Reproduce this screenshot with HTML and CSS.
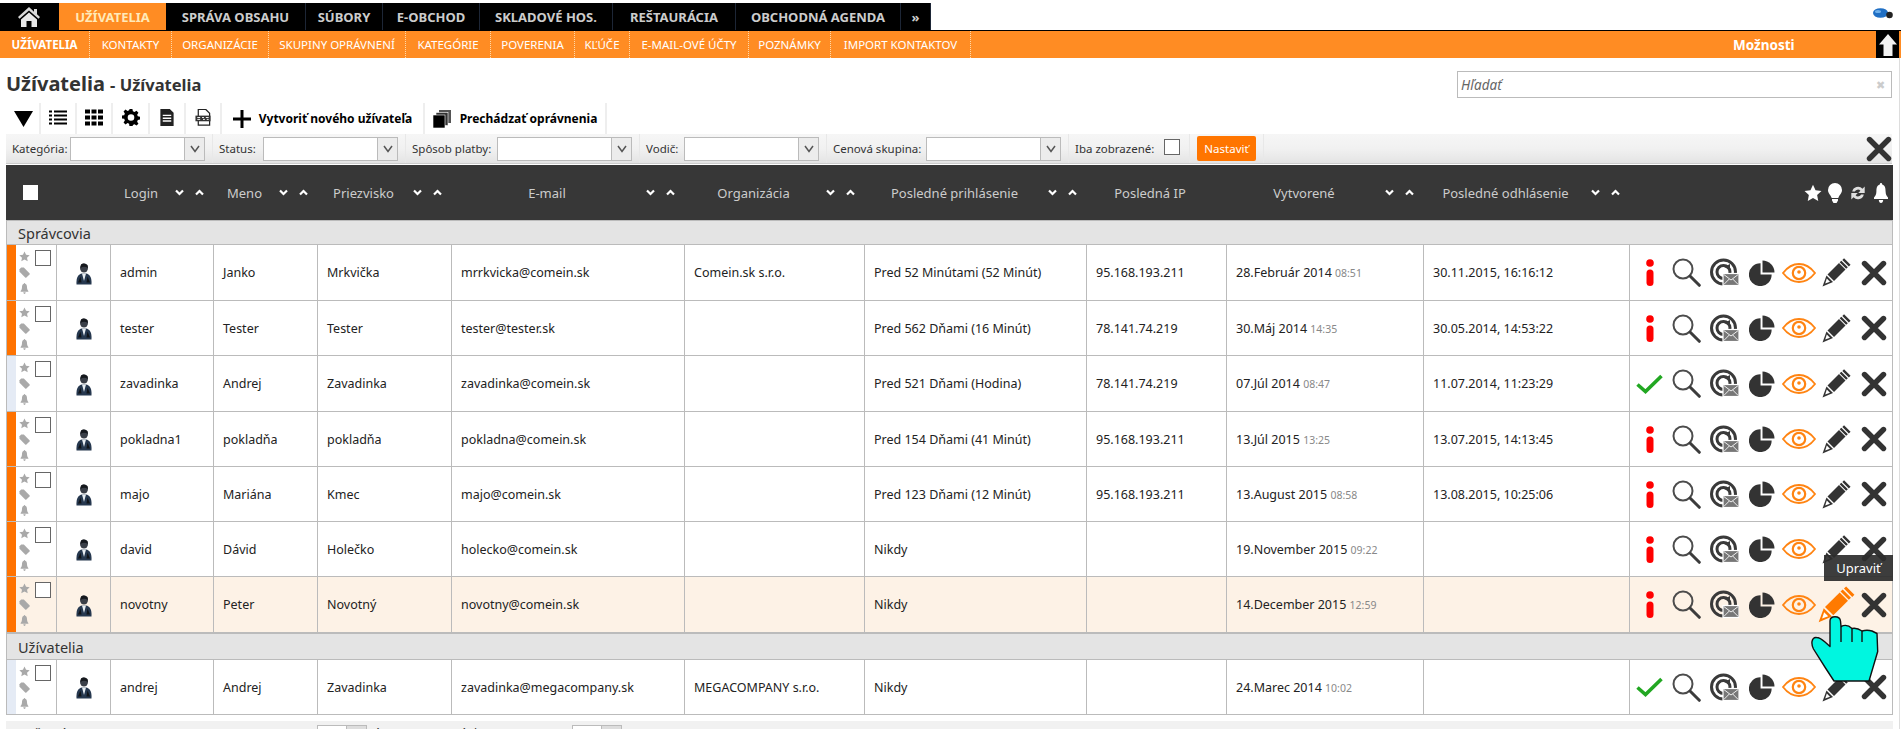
FILE: index.html
```html
<!DOCTYPE html>
<html lang="sk">
<head>
<meta charset="utf-8">
<title>Užívatelia</title>
<link rel="stylesheet" href="styles.css">
</head>
<body>
<svg class="defs" aria-hidden="true">
  <symbol id="star" viewBox="0 0 24 24"><path d="M12 1l3.4 7.3 7.9 1-5.8 5.4 1.5 7.9L12 18.7l-7 3.9 1.5-7.9L.7 9.3l7.9-1z"/></symbol>
  <symbol id="tag" viewBox="0 0 11 11"><path d="M.5 2.2L2.2.5h2.6l5.7 5.7q.5.6 0 1.2l-3.1 3.1q-.6.5-1.2 0L.5 4.8z"/></symbol>
  <symbol id="bell" viewBox="0 0 14 20"><path d="M7 0q1.2 0 1.2 1.4c3 .8 3.3 3.6 3.4 7 .1 2.800.9 4.400 2.400 6.100v1.500H0v-1.500c1.500-1.700 2.300-3.300 2.400-6.100.1-3.400.4-6.200 3.400-7Q5.800 0 7 0zM4.800 17h4.400Q8.900 20 7 20t-2.200-3z"/></symbol>
  <symbol id="bulb" viewBox="0 0 14 20"><path d="M7 0a7 7 0 0 1 7 7c0 3.500-2.800 5-3.700 8H3.700C2.800 12 0 10.500 0 7a7 7 0 0 1 7-7zM4 16h6v1.500L8.500 20h-3L4 17.500z"/></symbol>
  <symbol id="refresh" viewBox="0 0 18 18"><path d="M3.200 7.500A6 6 0 0 1 13.500 4.700L15.700 2.500V9H9.200l2.200-2.200a3.300 3.300 0 0 0-5.500.7zM14.800 10.500A6 6 0 0 1 4.500 13.300L2.300 15.500V9h6.500l-2.200 2.200a3.300 3.300 0 0 0 5.500-.7z"/></symbol>
  <symbol id="person" viewBox="0 0 16 22"><ellipse cx="8" cy="5" rx="4" ry="4.600" fill="#3a3f48"/><path d="M5 1.500Q8-.8 11.500 2L12 5Q8 2.500 4.500 5z" fill="#15181d"/><path d="M.5 21.500C0 14 2.500 11 6 10.500h4c3.500.5 6 3.500 5.500 11z" fill="#26384f"/><path d="M6 10.500h4L8 18z" fill="#e8eef3"/><path d="M2 19.500l2.500-6 1 6z" fill="#101418"/><path d="M14 19.500l-2.500-6-1 6z" fill="#101418"/></symbol>
  <symbol id="info" viewBox="0 0 10 27"><circle cx="5" cy="4" r="3.800"/><rect x="1.500" y="10.500" width="7" height="16.500" rx="3.500"/></symbol>
  <symbol id="check" viewBox="0 0 27 20"><path d="M1.500 10.500l8 7L25.500 2" fill="none" stroke="#22a722" stroke-width="3.600"/></symbol>
  <symbol id="mag" viewBox="0 0 29 29"><circle cx="11" cy="11" r="9.500" fill="none" stroke="#4c4c4c" stroke-width="2"/><path d="M18 18l9.300 9.300" stroke="#3c3c3c" stroke-width="3" stroke-linecap="round"/></symbol>
  <symbol id="at" viewBox="0 0 29 28"><circle cx="13.500" cy="13.500" r="12" fill="none" stroke="#3a3a3a" stroke-width="3"/><circle cx="13.500" cy="13.500" r="6.500" fill="none" stroke="#3a3a3a" stroke-width="3"/><path d="M14 8.500l6-3v6" fill="#3a3a3a"/><rect x="13" y="15" width="16" height="12" fill="#777" stroke="#fff" stroke-width="1.200"/><path d="M13.800 16l7.200 5.500 7.200-5.500M13.800 26l5.500-5.500M28.200 26l-5.500-5.500" fill="none" stroke="#eee"/></symbol>
  <symbol id="pie" viewBox="0 0 27 27"><path d="M12 3.500V15h11.500A11.800 11.800 0 1 1 12 3.500z" fill="#333"/><path d="M14 .500A12.800 12.800 0 0 1 26.500 13H14z" fill="#333"/></symbol>
  <symbol id="eye" viewBox="0 0 34 20"><path d="M1 10C6 3.500 11 1 17 1s11 2.500 16 9c-5 6.500-10 9-16 9S6 16.500 1 10z" fill="none" stroke="#ff8412" stroke-width="1.800"/><circle cx="17" cy="10" r="6.200" fill="none" stroke="#ff8412" stroke-width="2.200"/><circle cx="17" cy="9" r="1.800" fill="#ff8412"/></symbol>
  <symbol id="pen" viewBox="0 0 29 29"><path d="M5.500 16.500L17 5l6.500 6.500L12 23z"/><path d="M4.500 17.500l6.500 6.500L.5 28.500z"/><path d="M4.800 20.500l3.200 3.200-4.800 1.700z" fill="#fff"/><path d="M18.500 3.500l6.500 6.500M21.200 1.200l6.500 6.500" stroke-width="2.400" stroke="currentColor" fill="none"/></symbol>
  <symbol id="cross" viewBox="0 0 26 26"><path d="M3.500 3.500l19 19M22.500 3.500l-19 19" fill="none" stroke="currentColor" stroke-width="5.400" stroke-linecap="round"/></symbol>
  <symbol id="down" viewBox="0 0 9 7"><path d="M1 1.500l3.500 3.500L8 1.500" fill="none" stroke="#fff" stroke-width="2.200"/></symbol>
  <symbol id="up" viewBox="0 0 9 7"><path d="M1 5.500L4.500 2 8 5.500" fill="none" stroke="#fff" stroke-width="2.200"/></symbol>
  <symbol id="selarr" viewBox="0 0 12 10"><path d="M2 2l4 5.500L10 2" fill="none" stroke="#555" stroke-width="1.500"/></symbol>
</svg>

<nav class="topnav">
  <div class="tabs">
    <a class="tab home"><svg class="homeico" viewBox="0 0 24 21"><path d="M12 1L1 11l1.500 1.800L12 4.500l9.500 8.300L23 11l-3-2.700V3h-3v2.700z" fill="#d8d8d8"/><path d="M4 13.500L12 6.500l8 7V21h-5.500v-6h-5v6H4z" fill="#e8e8e8"/></svg></a>
    <a class="tab on">UŽÍVATELIA</a>
    <a class="tab">SPRÁVA OBSAHU</a>
    <a class="tab">SÚBORY</a>
    <a class="tab">E-OBCHOD</a>
    <a class="tab">SKLADOVÉ HOS.</a>
    <a class="tab">REŠTAURÁCIA</a>
    <a class="tab">OBCHODNÁ AGENDA</a>
    <a class="tab">»</a>
  </div>
  <svg class="mouse" viewBox="0 0 20 11"><ellipse cx="7.500" cy="5" rx="7.500" ry="4.800" fill="#1f6fc4"/><ellipse cx="5" cy="3.500" rx="3" ry="1.500" fill="#6fb0ea"/><circle cx="16.500" cy="7" r="3.300" fill="#222"/></svg>
</nav>

<div class="subnav">
  <div class="subtabs">
    <a class="sub on">UŽÍVATELIA</a>
    <a class="sub">KONTAKTY</a>
    <a class="sub">ORGANIZÁCIE</a>
    <a class="sub">SKUPINY OPRÁVNENÍ</a>
    <a class="sub">KATEGÓRIE</a>
    <a class="sub">POVERENIA</a>
    <a class="sub">KĽÚČE</a>
    <a class="sub">E-MAIL-OVÉ ÚČTY</a>
    <a class="sub">POZNÁMKY</a>
    <a class="sub">IMPORT KONTAKTOV</a>
  </div>
  <a class="options">Možnosti</a>
  <a class="upbox"><svg viewBox="0 0 20 24"><path d="M10 1l9 10.500h-4.500V23h-9V11.500H1z" fill="#f2f2f2"/></svg></a>
</div>

<main class="main">
  <div class="titlerow">
    <h1 class="title">Užívatelia <span class="title-sub">- Užívatelia</span></h1>
    <div class="search"><span class="search-ph">Hľadať</span><span class="search-x">✖</span></div>
  </div>

  <div class="toolbar">
    <a class="tbtn w35"><svg class="ico-tri" viewBox="0 0 19 16"><path d="M0 0h19L9.500 16z"/></svg></a>
    <a class="tbtn w36"><svg class="ico-16" viewBox="0 0 18 16"><path d="M0 1h3v2H0zM5 1h13v2H5zM0 5h3v2H0zM5 5h13v2H5zM0 9h3v2H0zM5 9h13v2H5zM0 13h3v2H0zM5 13h13v2H5z"/></svg></a>
    <a class="tbtn w36"><svg class="ico-16" viewBox="0 0 18 16"><path d="M0 0h5v4H0zM6.500 0h5v4h-5zM13 0h5v4h-5zM0 6h5v4H0zM6.500 6h5v4h-5zM13 6h5v4h-5zM0 12h5v4H0zM6.500 12h5v4h-5zM13 12h5v4h-5z"/></svg></a>
    <a class="tbtn w37"><svg class="ico-16" viewBox="0 0 18 18"><path d="M7.500 0h3l.5 2.500 1.700.7 2.100-1.400 2.100 2.100-1.400 2.100.7 1.700 2.500.5v3l-2.500.5-.7 1.700 1.400 2.100-2.100 2.100-2.100-1.400-1.700.7-.5 2.500h-3L7 15.600l-1.700-.7-2.100 1.400-2.100-2.100 1.400-2.100-.7-1.700L-.7 10V7l2.500-.5.7-1.700L1.100 2.700 3.200.6l2.100 1.400L7 1.300zM9 5.500a3.500 3.500 0 1 0 0 7 3.500 3.500 0 0 0 0-7z" fill-rule="evenodd"/></svg></a>
    <a class="tbtn w36"><svg class="ico-16" viewBox="0 0 16 18"><path d="M1 0h10l4 4v14H1zM3.500 6v1.500h9V6zM3.500 9v1.500h9V9zM3.500 12v1.500h9V12z" fill="#222" fill-rule="evenodd"/></svg></a>
    <a class="tbtn w36"><svg class="ico-16" viewBox="0 0 16 18"><path d="M3 .5h8l4 4V17H3z" fill="none" stroke="#222" stroke-width="1.300"/><rect x="0" y="7" width="16" height="6" fill="#333"/><path d="M2 9h3M7 9h2M11 9h3M2 11h3M8 11h2M12 11h2" stroke="#fff"/></svg></a>
    <a class="tbtn w203"><svg class="ico-plus" viewBox="0 0 18 18"><path d="M7.500 0h3v7.500H18v3h-7.500V18h-3v-7.500H0v-3h7.500z"/></svg><span class="tbtn-label">Vytvoriť nového užívateľa</span></a>
    <a class="tbtn w182"><svg class="ico-docs" viewBox="0 0 18 18"><rect x="6" y="0" width="12" height="13" fill="#555"/><rect x="3" y="2.500" width="12" height="13" fill="#333" stroke="#fff" stroke-width=".6"/><rect x="0" y="5" width="12" height="13" fill="#000" stroke="#fff" stroke-width=".6"/></svg><span class="tbtn-label">Prechádzať oprávnenia</span></a>
  </div>

  <form class="filters">
    <div class="filter"><label class="flabel">Kategória:</label><span class="fselect"><i class="farrow"><svg><use href="#selarr"/></svg></i></span></div>
    <div class="filter"><label class="flabel">Status:</label><span class="fselect"><i class="farrow"><svg><use href="#selarr"/></svg></i></span></div>
    <div class="filter"><label class="flabel">Spôsob platby:</label><span class="fselect"><i class="farrow"><svg><use href="#selarr"/></svg></i></span></div>
    <div class="filter"><label class="flabel">Vodič:</label><span class="fselect"><i class="farrow"><svg><use href="#selarr"/></svg></i></span></div>
    <div class="filter"><label class="flabel">Cenová skupina:</label><span class="fselect"><i class="farrow"><svg><use href="#selarr"/></svg></i></span></div>
    <div class="filter"><label class="flabel">Iba zobrazené:</label><span class="box fcheck"></span></div>
    <div class="filter"><span class="setbtn">Nastaviť</span></div>
    <div class="filter fclose"><svg class="bigx"><use href="#cross"/></svg></div>
  </form>

  <table class="grid">
    <colgroup>
      <col class="c-a"><col class="c-b"><col class="c-c"><col class="c-d"><col class="c-e"><col class="c-f"><col class="c-g"><col class="c-h"><col class="c-i"><col class="c-j"><col class="c-k"><col class="c-l">
    </colgroup>
    <thead>
      <tr>
        <th class="th-check"><span class="box head-box"></span></th>
        <th></th>
        <th><div class="hc"><span class="ht">Login</span><span class="sort"><svg><use href="#down"/></svg><svg><use href="#up"/></svg></span></div></th>
        <th><div class="hc"><span class="ht">Meno</span><span class="sort"><svg><use href="#down"/></svg><svg><use href="#up"/></svg></span></div></th>
        <th><div class="hc"><span class="ht">Priezvisko</span><span class="sort"><svg><use href="#down"/></svg><svg><use href="#up"/></svg></span></div></th>
        <th><div class="hc"><span class="ht">E-mail</span><span class="sort"><svg><use href="#down"/></svg><svg><use href="#up"/></svg></span></div></th>
        <th><div class="hc"><span class="ht">Organizácia</span><span class="sort"><svg><use href="#down"/></svg><svg><use href="#up"/></svg></span></div></th>
        <th><div class="hc"><span class="ht">Posledné prihlásenie</span><span class="sort"><svg><use href="#down"/></svg><svg><use href="#up"/></svg></span></div></th>
        <th><div class="hc"><span class="ht">Posledná IP</span></div></th>
        <th><div class="hc"><span class="ht">Vytvorené</span><span class="sort"><svg><use href="#down"/></svg><svg><use href="#up"/></svg></span></div></th>
        <th><div class="hc"><span class="ht">Posledné odhlásenie</span><span class="sort"><svg><use href="#down"/></svg><svg><use href="#up"/></svg></span></div></th>
        <th><div class="head-icons"><svg class="hi-star"><use href="#star"/></svg><svg class="hi-bulb"><use href="#bulb"/></svg><svg class="hi-ref"><use href="#refresh"/></svg><svg class="hi-bell"><use href="#bell"/></svg></div></th>
      </tr>
    </thead>
    <tbody>
      <tr class="group g1"><td colspan="12">Správcovia</td></tr>

      <tr class="h56">
        <td class="c0 st-on"><div class="marks"><div class="mk"><svg><use href="#star"/></svg><svg><use href="#tag"/></svg><svg><use href="#bell"/></svg></div><span class="box"></span></div></td>
        <td class="cp"><svg class="person"><use href="#person"/></svg></td>
        <td>admin</td><td>Janko</td><td>Mrkvička</td><td>mrrkvicka@comein.sk</td><td>Comein.sk s.r.o.</td><td>Pred 52 Minútami (52 Minút)</td><td>95.168.193.211</td><td>28.Február 2014 <small>08:51</small></td><td>30.11.2015, 16:16:12</td>
        <td class="ca"><div class="acts"><svg class="a-i"><use href="#info"/></svg><svg class="a-m"><use href="#mag"/></svg><svg class="a-m"><use href="#at"/></svg><svg class="a-p"><use href="#pie"/></svg><svg class="a-e"><use href="#eye"/></svg><svg class="a-m a-pen"><use href="#pen"/></svg><svg class="a-p a-x"><use href="#cross"/></svg></div></td>
      </tr>
      <tr class="h55">
        <td class="c0 st-on"><div class="marks"><div class="mk"><svg><use href="#star"/></svg><svg><use href="#tag"/></svg><svg><use href="#bell"/></svg></div><span class="box"></span></div></td>
        <td class="cp"><svg class="person"><use href="#person"/></svg></td>
        <td>tester</td><td>Tester</td><td>Tester</td><td>tester@tester.sk</td><td></td><td>Pred 562 Dňami (16 Minút)</td><td>78.141.74.219</td><td>30.Máj 2014 <small>14:35</small></td><td>30.05.2014, 14:53:22</td>
        <td class="ca"><div class="acts"><svg class="a-i"><use href="#info"/></svg><svg class="a-m"><use href="#mag"/></svg><svg class="a-m"><use href="#at"/></svg><svg class="a-p"><use href="#pie"/></svg><svg class="a-e"><use href="#eye"/></svg><svg class="a-m a-pen"><use href="#pen"/></svg><svg class="a-p a-x"><use href="#cross"/></svg></div></td>
      </tr>
      <tr class="h56">
        <td class="c0 st-off"><div class="marks"><div class="mk"><svg><use href="#star"/></svg><svg><use href="#tag"/></svg><svg><use href="#bell"/></svg></div><span class="box"></span></div></td>
        <td class="cp"><svg class="person"><use href="#person"/></svg></td>
        <td>zavadinka</td><td>Andrej</td><td>Zavadinka</td><td>zavadinka@comein.sk</td><td></td><td>Pred 521 Dňami (Hodina)</td><td>78.141.74.219</td><td>07.Júl 2014 <small>08:47</small></td><td>11.07.2014, 11:23:29</td>
        <td class="ca"><div class="acts"><svg class="a-c"><use href="#check"/></svg><svg class="a-m"><use href="#mag"/></svg><svg class="a-m"><use href="#at"/></svg><svg class="a-p"><use href="#pie"/></svg><svg class="a-e"><use href="#eye"/></svg><svg class="a-m a-pen"><use href="#pen"/></svg><svg class="a-p a-x"><use href="#cross"/></svg></div></td>
      </tr>
      <tr class="h55">
        <td class="c0 st-on"><div class="marks"><div class="mk"><svg><use href="#star"/></svg><svg><use href="#tag"/></svg><svg><use href="#bell"/></svg></div><span class="box"></span></div></td>
        <td class="cp"><svg class="person"><use href="#person"/></svg></td>
        <td>pokladna1</td><td>pokladňa</td><td>pokladňa</td><td>pokladna@comein.sk</td><td></td><td>Pred 154 Dňami (41 Minút)</td><td>95.168.193.211</td><td>13.Júl 2015 <small>13:25</small></td><td>13.07.2015, 14:13:45</td>
        <td class="ca"><div class="acts"><svg class="a-i"><use href="#info"/></svg><svg class="a-m"><use href="#mag"/></svg><svg class="a-m"><use href="#at"/></svg><svg class="a-p"><use href="#pie"/></svg><svg class="a-e"><use href="#eye"/></svg><svg class="a-m a-pen"><use href="#pen"/></svg><svg class="a-p a-x"><use href="#cross"/></svg></div></td>
      </tr>
      <tr class="h55">
        <td class="c0 st-on"><div class="marks"><div class="mk"><svg><use href="#star"/></svg><svg><use href="#tag"/></svg><svg><use href="#bell"/></svg></div><span class="box"></span></div></td>
        <td class="cp"><svg class="person"><use href="#person"/></svg></td>
        <td>majo</td><td>Mariána</td><td>Kmec</td><td>majo@comein.sk</td><td></td><td>Pred 123 Dňami (12 Minút)</td><td>95.168.193.211</td><td>13.August 2015 <small>08:58</small></td><td>13.08.2015, 10:25:06</td>
        <td class="ca"><div class="acts"><svg class="a-i"><use href="#info"/></svg><svg class="a-m"><use href="#mag"/></svg><svg class="a-m"><use href="#at"/></svg><svg class="a-p"><use href="#pie"/></svg><svg class="a-e"><use href="#eye"/></svg><svg class="a-m a-pen"><use href="#pen"/></svg><svg class="a-p a-x"><use href="#cross"/></svg></div></td>
      </tr>
      <tr class="h55">
        <td class="c0 st-on"><div class="marks"><div class="mk"><svg><use href="#star"/></svg><svg><use href="#tag"/></svg><svg><use href="#bell"/></svg></div><span class="box"></span></div></td>
        <td class="cp"><svg class="person"><use href="#person"/></svg></td>
        <td>david</td><td>Dávid</td><td>Holečko</td><td>holecko@comein.sk</td><td></td><td>Nikdy</td><td></td><td>19.November 2015 <small>09:22</small></td><td></td>
        <td class="ca"><div class="acts"><svg class="a-i"><use href="#info"/></svg><svg class="a-m"><use href="#mag"/></svg><svg class="a-m"><use href="#at"/></svg><svg class="a-p"><use href="#pie"/></svg><svg class="a-e"><use href="#eye"/></svg><svg class="a-m a-pen"><use href="#pen"/></svg><svg class="a-p a-x"><use href="#cross"/></svg></div></td>
      </tr>
      <tr class="h56 hover">
        <td class="c0 st-on"><div class="marks"><div class="mk"><svg><use href="#star"/></svg><svg><use href="#tag"/></svg><svg><use href="#bell"/></svg></div><span class="box"></span></div></td>
        <td class="cp"><svg class="person"><use href="#person"/></svg></td>
        <td>novotny</td><td>Peter</td><td>Novotný</td><td>novotny@comein.sk</td><td></td><td>Nikdy</td><td></td><td>14.December 2015 <small>12:59</small></td><td></td>
        <td class="ca"><div class="acts"><svg class="a-i"><use href="#info"/></svg><svg class="a-m"><use href="#mag"/></svg><svg class="a-m"><use href="#at"/></svg><svg class="a-p"><use href="#pie"/></svg><svg class="a-e"><use href="#eye"/></svg><svg class="a-pen-on"><use href="#pen"/></svg><svg class="a-p a-x"><use href="#cross"/></svg>
          <span class="tooltip">Upraviť</span>
          <svg class="hand" viewBox="0 0 68 66"><path d="M1 25.500Q2 21 5.500 21.500 9 21.500 14 26l5 4.500V5Q19 .700 24 .700T29.500 5l.5 5.500Q36 7.500 41 12.500q5-1 10 2.500 5-1.500 10 0l5 2.500.7 18L58 65H23L14.500 52 2.500 33Q.500 29 1 25.500z" fill="#00f6e0" stroke="#111" stroke-width="1.400" stroke-linejoin="round"/><path d="M30 10.500V26M41 12.500V26M51 15v11" fill="none" stroke="#111" stroke-width="1.400"/></svg>
        </div></td>
      </tr>

      <tr class="group g2"><td colspan="12">Užívatelia</td></tr>

      <tr class="h55">
        <td class="c0 st-off"><div class="marks"><div class="mk"><svg><use href="#star"/></svg><svg><use href="#tag"/></svg><svg><use href="#bell"/></svg></div><span class="box"></span></div></td>
        <td class="cp"><svg class="person"><use href="#person"/></svg></td>
        <td>andrej</td><td>Andrej</td><td>Zavadinka</td><td>zavadinka@megacompany.sk</td><td>MEGACOMPANY s.r.o.</td><td>Nikdy</td><td></td><td>24.Marec 2014 <small>10:02</small></td><td></td>
        <td class="ca"><div class="acts"><svg class="a-c"><use href="#check"/></svg><svg class="a-m"><use href="#mag"/></svg><svg class="a-m"><use href="#at"/></svg><svg class="a-p"><use href="#pie"/></svg><svg class="a-e"><use href="#eye"/></svg><svg class="a-m a-pen"><use href="#pen"/></svg><svg class="a-p a-x"><use href="#cross"/></svg></div></td>
      </tr>
    </tbody>
  </table>

  <div class="pager">
    <span class="pg-label">Počet záznamov: 8, strana 1</span>
    <span class="pg-select"><i class="pg-arrow"></i></span>
    <span class="pg-label pg-mid">Záznamov na stránku:</span>
    <span class="pg-select"><i class="pg-arrow"></i></span>
  </div>
</main>
</body>
</html>
```
FILE: styles.css
```css
* { box-sizing: border-box; }
html, body { margin: 0; padding: 0; height: 729px; overflow: hidden; background: #fff; }
body { font: 12.5px "Noto Sans", "Liberation Sans", sans-serif; color: #222; }
.defs { position: absolute; width: 0; height: 0; }
a { color: inherit; text-decoration: none; }

.topnav { display: flex; justify-content: space-between; margin-top: 3px; height: 28px; border-bottom: 1px solid #000; }
.tabs { display: grid; grid-template-columns: 59px 107px 140px 77px 97px 133px 123px 165px 30px; height: 27px; background: #000; }
.tab { display: flex; align-items: center; justify-content: center; font-size: 13px; font-weight: 700; color: #ccc; border-right: 1px solid #1d2636; white-space: nowrap; }
.tab.on { background: #ff8c23; color: #ffe9b8; border-right: 0; height: 27px; }
.tab.home { border-right: 0; padding-right: 1px; }
.homeico { width: 24px; height: 21px; }
.mouse { width: 20px; height: 11px; margin: 5px 8px 0 0; }

.subnav { display: flex; align-items: stretch; height: 27px; background: #ff8c23; padding-right: 2px; }
.subtabs { display: grid; grid-template-columns: 90px 82px 97px 137px 85px 84px 55px 119px 82px 140px; }
.sub { display: flex; align-items: center; justify-content: center; color: #fff; font-size: 11.500px; border-right: 1px dotted #ffd9a8; white-space: nowrap; }
.sub.on { font-weight: 700; }
.options { margin-left: auto; display: flex; align-items: center; width: 143px; color: #fff; font-weight: 700; font-size: 13.500px; }
.upbox { width: 23px; background: #000; display: flex; align-items: center; justify-content: center; }
.upbox svg { width: 20px; height: 24px; }

.main { padding: 0 7px 0 6px; border-right: 1px solid #ddd; margin-right: 1px; height: 671px; }

.titlerow { display: flex; justify-content: space-between; height: 45px; padding-top: 13px; }
.title { margin: 0; font-size: 20px; font-weight: 700; color: #333; line-height: 26px; }
.title-sub { font-size: 16.500px; }
.search { width: 435px; height: 27px; border: 1px solid #bbb; display: flex; align-items: center; justify-content: space-between; padding: 0 6px 0 3px; }
.search-ph { font-style: italic; font-size: 13.500px; color: #666; }
.search-x { font-size: 11px; color: #ccc; }

.toolbar { display: flex; height: 31px; }
.tbtn { display: flex; align-items: center; justify-content: center; height: 31px; border-right: 2px solid #eee; }
.w35 { width: 35px; } .w36 { width: 36px; } .w37 { width: 37px; }
.w203 { width: 203px; } .w182 { width: 182px; }
.ico-tri { width: 19px; height: 16px; margin-left: 2px; }
.ico-16 { width: 18px; height: 17px; margin-top: -2px; }
.ico-plus { width: 18px; height: 18px; margin-right: 8px; flex: none; }
.ico-docs { width: 18px; height: 18px; margin-right: 9px; flex: none; }
.tbtn-label { font-size: 12px; font-weight: 700; color: #000; white-space: nowrap; }

.filters { display: grid; grid-template-columns: 207px 193px 234px 187px 242px 121px 74px 1fr; height: 30px; background: linear-gradient(#f6f6f6, #f1f1f1 50%, #e4e4e4); border-bottom: 1px solid #ccc; margin: 0; }
.filter { display: flex; align-items: center; justify-content: space-between; padding: 0 7px 0 6px; border-right: 1px solid #e8e8e8; }
.flabel { font-size: 11.500px; color: #333; white-space: nowrap; }
.fselect { flex: none; width: 135px; height: 24px; background: #fff; border: 1px solid #bbb; display: flex; justify-content: flex-end; }
.farrow { width: 20px; height: 22px; background: #ececec; border-left: 1px solid #bbb; display: flex; align-items: center; justify-content: center; }
.farrow svg { width: 12px; height: 10px; }
.box { display: block; flex: none; width: 16px; height: 16px; border: 1px solid #666; background: #fff; }
.fcheck { margin-top: -4px; margin-right: 2px; }
.setbtn { width: 60px; height: 25px; margin-left: 1px; background: #ff7500; border-radius: 2px; color: #fff; font-size: 11.500px; display: flex; align-items: center; justify-content: center; }
.fclose { border-right: 0; justify-content: flex-end; padding-right: 0; }
.bigx { width: 26px; height: 26px; color: #333; }

.grid { border-collapse: separate; border-spacing: 0; table-layout: fixed; width: 1887px; margin-top: 1px; }
.c-a { width: 51px; } .c-b { width: 54px; } .c-c { width: 103px; } .c-d { width: 104px; }
.c-e { width: 134px; } .c-f { width: 233px; } .c-g { width: 180px; } .c-h { width: 222px; }
.c-i { width: 140px; } .c-j { width: 197px; } .c-k { width: 206px; } .c-l { width: 263px; }

thead tr { height: 55px; }
th { background: #373737; padding: 0; font-weight: 400; color: #ccc; font-size: 13px; }
.th-check { padding-left: 17px; }
.head-box { width: 15px; height: 15px; border: 0; }
.hc { display: flex; align-items: center; padding-right: 10px; }
.ht { flex: 1; text-align: center; padding-right: 4px; white-space: nowrap; }
.sort { display: flex; gap: 11px; flex: none; }
.sort svg { width: 9px; height: 7px; }
.head-icons { display: flex; justify-content: flex-end; align-items: center; padding-right: 5px; fill: #fff; }
.hi-star { width: 18px; height: 18px; margin-right: 6px; }
.hi-bulb { width: 14px; height: 20px; margin-right: 7px; }
.hi-ref { width: 18px; height: 18px; margin-right: 7px; fill: #e0e0e0; }
.hi-bell { width: 14px; height: 20px; }

td { padding: 0 0 0 9px; border-right: 1px solid #bbb; border-bottom: 1px solid #bbb; white-space: nowrap; overflow: visible; font-size: 12.500px; }
.h56 { height: 56px; }
.h55 { height: 55px; }
.group td { background: #e4e4e4; border-left: 1px solid #bbb; font-size: 14.500px; color: #333; padding-left: 11px; }
.g1 { height: 25px; }
.g1 td { border-top: 1px solid #bbb; }
.g2 { height: 27px; }
.g2 td { border-top: 1px solid #bbb; }
.c0 { border-left: 1px solid #bbb; padding: 5px 0 0 12px; vertical-align: top; }
.st-on { box-shadow: inset 9px 0 0 #ff7200; }
.st-off { box-shadow: inset 9px 0 0 #e5ebf5; }
.marks { display: flex; gap: 5px; align-items: flex-start; }
.mk { display: flex; flex-direction: column; gap: 5px; fill: #a9a9a9; margin-top: 1px; }
.mk svg { display: block; width: 11px; height: 11px; }
.marks .box { width: 16px; height: 16px; }
.cp { padding: 0; text-align: center; }
.person { display: inline-block; vertical-align: middle; width: 16px; height: 22px; margin-top: 2px; }
small { font-size: 10.500px; color: #888; }
.ca { padding: 0; }
.acts { position: relative; display: grid; grid-template-columns: repeat(7, 37.330px); justify-content: start; justify-items: center; align-items: center; padding-left: 1px; height: 37px; color: #333; fill: #333; }
.a-i { width: 10px; height: 27px; fill: #f00; }
.a-c { width: 27px; height: 20px; }
.a-m { width: 29px; height: 29px; }
.a-p { width: 26px; height: 26px; }
.a-e { width: 34px; height: 20px; }
.a-pen-on { width: 37px; height: 37px; color: #ff7a00; fill: #ff7a00; }
.hover td { background: #fdf2e6; }
.tooltip { position: absolute; left: 194px; top: -31px; width: 69px; height: 26px; background: rgba(45,45,45,.92); color: #fff; font-size: 13px; display: flex; align-items: center; justify-content: center; z-index: 5; }
.hand { position: absolute; left: 181px; top: 30px; width: 68px; height: 66px; z-index: 6; }

.pager { display: flex; align-items: flex-start; margin-top: 6px; width: 1887px; height: 30px; background: #f1f1f1; padding: 4px 0 0 14px; color: #333; }
.pg-label { width: 297px; font-size: 12px; line-height: 16px; margin-top: 1px; }
.pg-mid { width: 205px; }
.pg-select { display: flex; justify-content: flex-end; width: 50px; height: 22px; background: #fff; border: 1px solid #bbb; }
.pg-arrow { width: 20px; background: #ddd; border-left: 1px solid #bbb; }
```
